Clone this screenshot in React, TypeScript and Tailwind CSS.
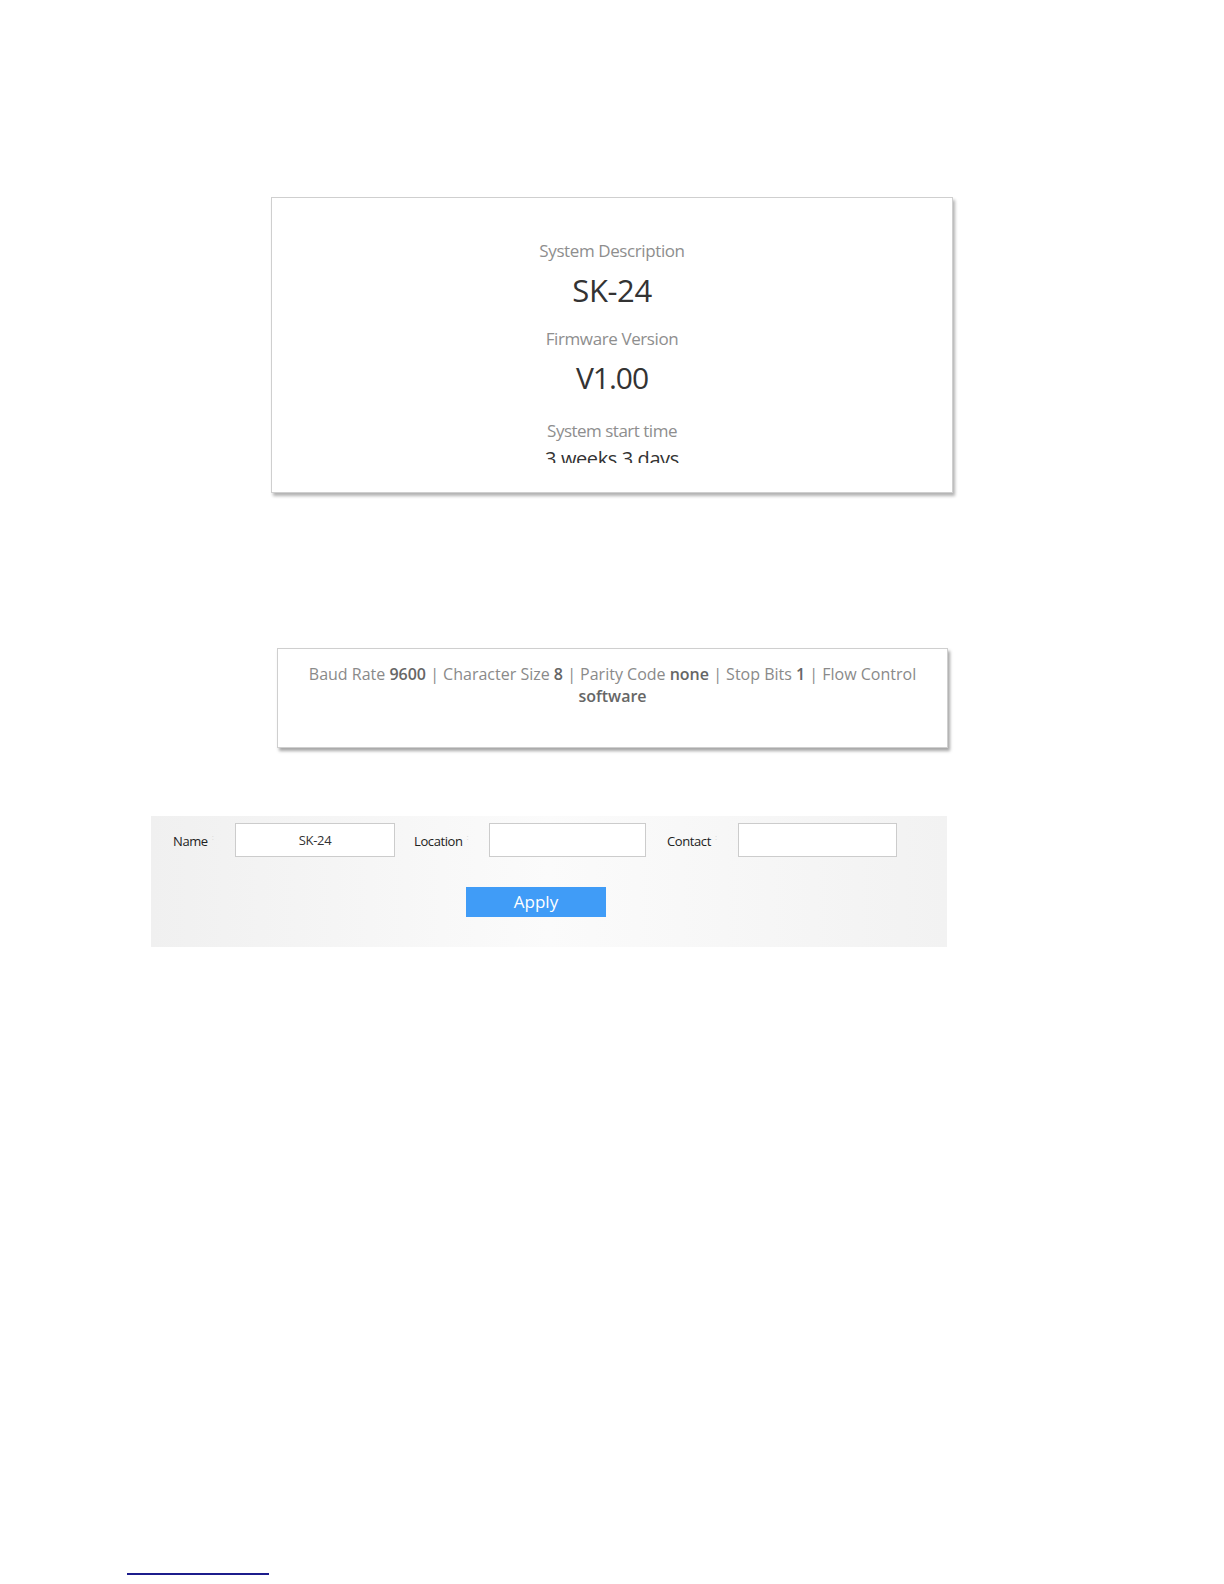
const font = { fontFamily: '"Open Sans", "Noto Sans", sans-serif' };

const InfoCard = () => {
  return (
    <div className="ml-[271px] h-[296px] w-[682px] border border-[#cfcfcf] bg-white shadow-[2px_3px_3px_rgba(0,0,0,0.3)]">
      <div className="flex h-[265px] flex-col items-center overflow-hidden pt-[41px] tracking-[-0.4px]">
        <p className="text-[17px] leading-[24px] text-[#8e8e8e]">System Description</p>
        <p className="text-[31px] leading-[54px] text-[#333]">SK-24</p>
        <p className="mt-[10px] text-[17px] leading-[24px] text-[#8e8e8e]">Firmware Version</p>
        <p className="text-[30px] leading-[54px] tracking-[-1px] text-[#333]">V1.00</p>
        <p className="mt-[14px] text-[17px] leading-[24px] tracking-[-0.5px] text-[#8e8e8e]">System start time</p>
        <p className="mt-[4px] text-[20px] leading-[24px] text-[#333]">3 weeks 3 days</p>
      </div>
    </div>
  );
};

const SerialCard = () => {
  return (
    <div className="mt-[155px] ml-[277px] h-[100px] w-[671px] border border-[#cfcfcf] bg-white px-[22px] pt-[14px] shadow-[2px_3px_3px_rgba(0,0,0,0.35)]">
      <p className="text-center text-[16px] leading-[22px] text-[#8a8a8a]">
        Baud Rate <b className="font-semibold text-[#666]">9600</b> | Character Size{" "}
        <b className="font-semibold text-[#666]">8</b> | Parity Code{" "}
        <b className="font-semibold text-[#666]">none</b> | Stop Bits{" "}
        <b className="font-semibold text-[#666]">1</b> | Flow Control{" "}
        <b className="font-semibold text-[#666]">software</b>
      </p>
    </div>
  );
};

const Label = ({ text, width }: { text: string; width: string }) => (
  <span className={`${width} flex items-start pt-[3px] text-[13px] tracking-[-0.4px] text-[#222]`}>
    {text}
    <span className="ml-[4px] text-[8px] leading-[10px] text-[#d8d8d8]">:</span>
  </span>
);

const SystemForm = () => {
  return (
    <form className="mt-[68px] ml-[151px] h-[131px] w-[796px] bg-gradient-to-r from-[#f0f0f0] via-[#fbfbfb] to-[#f2f2f2] pl-[22px] pt-[7px]">
      <div className="flex flex-row items-center">
        <Label text="Name" width="w-[62px]" />
        <input
          className="h-[34px] w-[160px] border border-[#cccccc] bg-white text-center text-[13px] tracking-[-0.3px] text-[#333] outline-none"
          defaultValue="SK-24"
        />
        <span className="ml-[19px]" />
        <Label text="Location" width="w-[75px]" />
        <input className="h-[34px] w-[157px] border border-[#cccccc] bg-white outline-none" />
        <span className="ml-[21px]" />
        <Label text="Contact" width="w-[71px]" />
        <input className="h-[34px] w-[159px] border border-[#cccccc] bg-white outline-none" />
      </div>
      <button
        type="button"
        className="mt-[30px] ml-[293px] h-[30px] w-[140px] bg-[#409cf7] text-[17px] leading-[30px] text-white"
      >
        Apply
      </button>
    </form>
  );
};

export default function App() {
  return (
    <div className="min-h-[1584px] w-[1224px] bg-white pt-[197px]" style={font}>
      <InfoCard />
      <SerialCard />
      <SystemForm />
      <div className="mt-[626px] ml-[127px] h-[2px] w-[142px] bg-[#1c1c8c]" />
    </div>
  );
}
